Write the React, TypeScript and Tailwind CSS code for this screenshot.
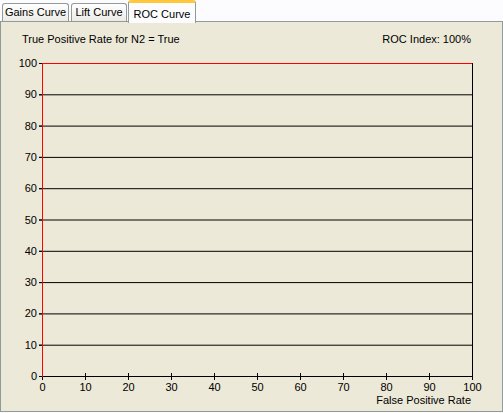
import React from 'react';

const tabs = [
  { label: 'Gains Curve', active: false, width: 'w-[67px]' },
  { label: 'Lift Curve', active: false, width: 'w-[56px]' },
  { label: 'ROC Curve', active: true, width: 'w-[68px]' },
];

const ticks = [0, 10, 20, 30, 40, 50, 60, 70, 80, 90, 100];

// plot box in page pixels
const X0 = 42;
const X1 = 472;
const Y0 = 64;
const Y1 = 377;
const sx = (v: number) => X0 + ((X1 - X0) * v) / 100;
const sy = (v: number) => Y1 - ((Y1 - Y0) * v) / 100;

const RocChart: React.FC = () => {
  return (
    <svg width={501} height={364} className="block" style={{ fontFamily: '"Liberation Sans", Arial, sans-serif' }}>
      <g transform="translate(-1,-48)" fontSize="11" fill="#000">
        {/* horizontal grid */}
        {ticks.map((t) => (
          <g key={`y${t}`}>
            <line x1={39} x2={X1} y1={sy(t) + 0.5} y2={sy(t) + 0.5} stroke={t === 100 ? '#ff0000' : '#000'} />
            <line x1={39} x2={X0} y1={sy(t) + 0.5} y2={sy(t) + 0.5} stroke="#000" />
            <text x={37} y={sy(t) + 4} textAnchor="end">{t}</text>
          </g>
        ))}
        {/* right edge */}
        <line x1={X1 + 0.5} x2={X1 + 0.5} y1={Y0} y2={Y1 + 1} stroke="#000" />
        {/* x ticks */}
        {ticks.map((t) => (
          <g key={`x${t}`}>
            <line x1={Math.round(sx(t)) + 0.5} x2={Math.round(sx(t)) + 0.5} y1={t === 0 ? Y1 : 374} y2={381} stroke="#000" />
            <text x={Math.round(sx(t)) + 0.5} y={392} textAnchor="middle">{t}</text>
          </g>
        ))}
        {/* left axis */}
        <line x1={X0 + 0.5} x2={X0 + 0.5} y1={Y0} y2={Y1 + 1} stroke="#ff0000" />
        <text x={471} y={405} textAnchor="end">False Positive Rate</text>
      </g>
    </svg>
  );
};

export default function App() {
  return (
    <div
      className="w-[503px] h-[413px] bg-[#fcfcfe] overflow-hidden text-[11px] text-black"
      style={{ fontFamily: '"Liberation Sans", Arial, sans-serif' }}
    >
      {/* tab strip */}
      <div className="flex items-end h-[21px] pl-[2px] gap-[2px] relative z-10">
        {tabs.map((tab) =>
          tab.active ? (
            <div
              key={tab.label}
              className={`${tab.width} h-[23px] -mb-[2px] -ml-[1px] flex items-start justify-center pt-[3px] bg-[#fcfcfe] border-x border-[#919b9c] border-t-[3px] border-t-[#ffc83c] rounded-t-[3px]`}
            >
              {tab.label}
            </div>
          ) : (
            <div
              key={tab.label}
              className={`${tab.width} h-[18px] flex items-center justify-center bg-gradient-to-b from-white to-[#ecebe6] border border-b-0 border-[#919b9c] rounded-t-[3px] leading-none`}
            >
              {tab.label}
            </div>
          )
        )}
      </div>

      {/* tab panel */}
      <div className="h-[391px] bg-[#ece9d8] border border-[#919b9c]">
        <div className="flex justify-between pl-[21px] pr-[31px] pt-[11px] leading-[13px] h-[25px]">
          <span>True Positive Rate for N2 = True</span>
          <span>ROC Index: 100%</span>
        </div>
        <RocChart />
      </div>
    </div>
  );
}
